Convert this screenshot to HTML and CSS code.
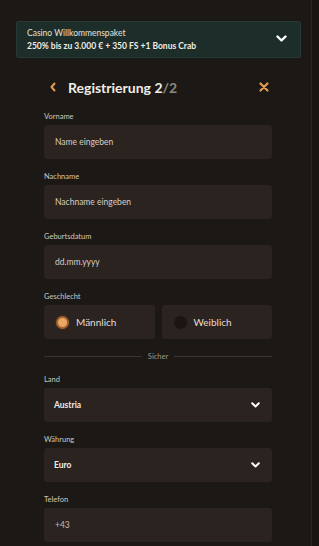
FILE: index.html
```html
<!DOCTYPE html>
<html lang="de">
<head>
<meta charset="utf-8">
<title>Registrierung</title>
<link rel="stylesheet" href="styles.css">
</head>
<body>
<div class="page">
  <div class="banner">
    <div class="banner-text">
      <div class="banner-title">Casino Willkommenspaket</div>
      <div class="banner-offer">250% bis zu 3.000 € + 350 FS +1 Bonus Crab</div>
    </div>
    <svg class="banner-chev" width="11" height="8" viewBox="0 0 11 8"><polyline points="1.5,1.5 5.5,5.5 9.5,1.5" fill="none" stroke="#fff" stroke-width="2.4" stroke-linecap="round" stroke-linejoin="round"/></svg>
  </div>

  <div class="head">
    <svg class="back" width="8" height="10" viewBox="0 0 8 10"><polyline points="5.5,1.5 2.5,5 5.5,8.5" fill="none" stroke="#e39a55" stroke-width="2" stroke-linecap="round" stroke-linejoin="round"/></svg>
    <div class="title">Registrierung 2<span class="title-total">/2</span></div>
    <svg class="close" width="10" height="10" viewBox="0 0 10 10"><path d="M1.5 1.5 L8.5 8.5 M8.5 1.5 L1.5 8.5" fill="none" stroke="#e39a55" stroke-width="2.2" stroke-linecap="round"/></svg>
  </div>

  <form class="form">
    <div class="group">
      <div class="label">Vorname</div>
      <div class="field"><span class="placeholder">Name eingeben</span></div>
    </div>
    <div class="group">
      <div class="label">Nachname</div>
      <div class="field"><span class="placeholder">Nachname eingeben</span></div>
    </div>
    <div class="group">
      <div class="label">Geburtsdatum</div>
      <div class="field"><span class="placeholder">dd.mm.yyyy</span></div>
    </div>
    <div class="group">
      <div class="label">Geschlecht</div>
      <div class="radios">
        <div class="radio"><span class="dot dot-on"></span><span class="radio-label">Männlich</span></div>
        <div class="radio"><span class="dot"></span><span class="radio-label">Weiblich</span></div>
      </div>
    </div>
    <div class="divider"><span class="line"></span><span class="divider-text">Sicher</span><span class="line"></span></div>
    <div class="group">
      <div class="label">Land</div>
      <div class="field select"><span class="value">Austria</span>
        <svg width="9" height="6" viewBox="0 0 9 6"><polyline points="1.2,1.2 4.5,4.5 7.8,1.2" fill="none" stroke="#fff" stroke-width="2" stroke-linecap="round" stroke-linejoin="round"/></svg>
      </div>
    </div>
    <div class="group">
      <div class="label">Währung</div>
      <div class="field select"><span class="value">Euro</span>
        <svg width="9" height="6" viewBox="0 0 9 6"><polyline points="1.2,1.2 4.5,4.5 7.8,1.2" fill="none" stroke="#fff" stroke-width="2" stroke-linecap="round" stroke-linejoin="round"/></svg>
      </div>
    </div>
    <div class="group">
      <div class="label">Telefon</div>
      <div class="field"><span class="phone">+43</span></div>
    </div>
  </form>
</div>
</body>
</html>
```

FILE: styles.css
```css
html, body {
  margin: 0;
  padding: 0;
  background: #171411;
}
body {
  font-family: Lato, "Open Sans", sans-serif;
  color: #e9e3db;
  width: 319px;
  height: 546px;
  overflow: hidden;
}
.page {
  width: 312px;
  height: 546px;
  box-sizing: border-box;
  background: #1b1815;
  border-right: 1px solid #2a2521;
  padding-top: 21px;
}
.banner {
  margin: 0 10px 0 16px;
  height: 37px;
  box-sizing: border-box;
  background: #1d2d29;
  border: 1px solid #273934;
  border-radius: 2px;
  display: flex;
  align-items: center;
  justify-content: space-between;
  padding: 0 13px 0 10px;
}
.banner-title {
  font-size: 8.5px;
  line-height: 13px;
  color: #e6e1da;
}
.banner-offer {
  font-size: 8.5px;
  line-height: 13px;
  font-weight: 700;
  color: #f1ece5;
}
.banner-chev {
  display: block;
  margin-top: -2px;
}
.head {
  margin: 17px 42px 0 44px;
  height: 24px;
  display: flex;
  align-items: center;
}
.back {
  display: block;
  margin-left: 5px;
}
.title {
  margin-left: 11px;
  font-size: 14px;
  font-weight: 700;
  color: #f1ece6;
  flex: 1;
}
.title-total {
  color: #8c8883;
}
.close {
  display: block;
}
.form {
  margin: 12px 39px 0 44px;
  display: flex;
  flex-direction: column;
  gap: 12px;
}
.label {
  font-size: 7.5px;
  line-height: 12px;
  color: #cfc8bf;
  margin-bottom: 2px;
}
.field {
  height: 34px;
  box-sizing: border-box;
  background: #2a2320;
  border-radius: 3px;
  display: flex;
  align-items: center;
  padding: 0 11px;
}
.placeholder {
  font-size: 8.5px;
  color: #d6cec4;
}
.phone {
  font-size: 8.5px;
  color: #c2bbb3;
}
.select {
  justify-content: space-between;
  padding: 0 12px 0 10px;
}
.select svg {
  display: block;
}
.value {
  font-size: 8.5px;
  font-weight: 700;
  color: #f0ebe4;
}
.radios {
  display: flex;
  gap: 7px;
}
.radio {
  flex: 1;
  height: 34px;
  box-sizing: border-box;
  background: #2a2320;
  border-radius: 3px;
  display: flex;
  align-items: center;
  padding-left: 12px;
}
.dot {
  width: 13px;
  height: 13px;
  box-sizing: border-box;
  border-radius: 50%;
  background: #1a1412;
}
.dot-on {
  background: #eaa765;
  border: 2px solid #a8612c;
  box-shadow: 0 0 0 1px #3a2a20;
}
.radio-label {
  margin-left: 7px;
  font-size: 10px;
  color: #e6dfd6;
}
.divider {
  height: 10px;
  margin: 0 0 1px;
  display: flex;
  align-items: center;
  gap: 6px;
}
.line {
  flex: 1;
  height: 1px;
  background: #3a3430;
}
.divider-text {
  font-size: 7.5px;
  color: #9f978e;
}
```
